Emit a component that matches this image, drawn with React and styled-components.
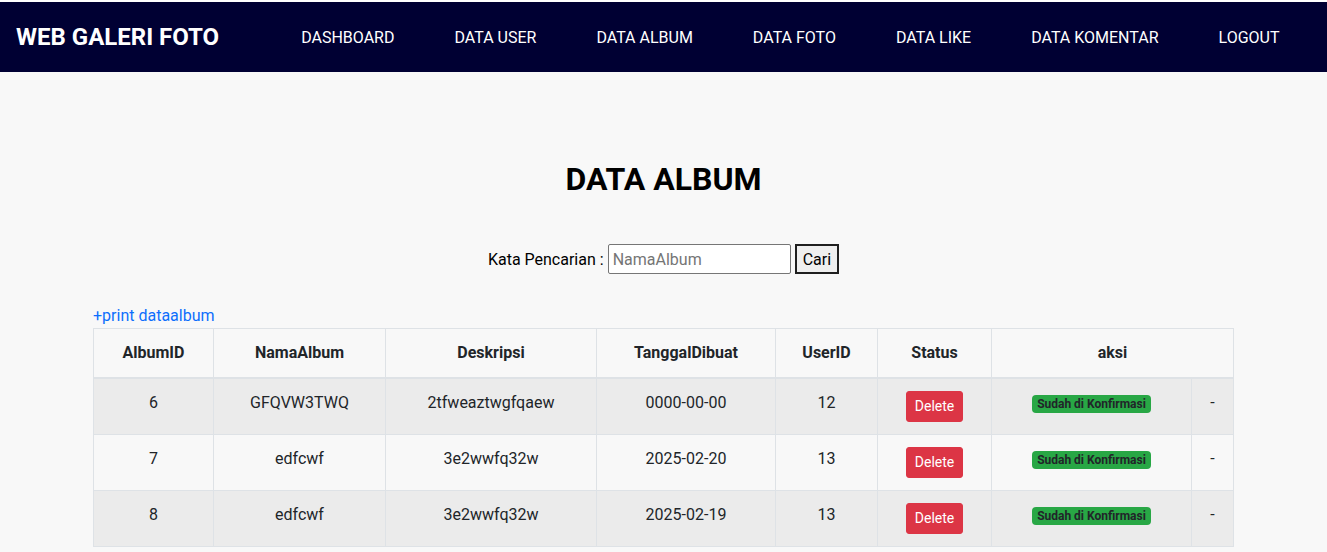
import React from 'react';
import styled, { createGlobalStyle } from 'styled-components';

const GlobalStyle = createGlobalStyle`
  body {
    margin: 0;
    background: #f8f8f8;
    font-family: Roboto, "Liberation Sans", sans-serif;
    color: #212529;
  }
`;

const Navbar = styled.nav`
  display: flex;
  align-items: center;
  height: 70px;
  border-top: 2px solid #ffffff;
  background: #000033;
  padding: 0 16px;
`;

const Brand = styled.a`
  color: #ffffff;
  font-size: 24px;
  font-weight: 700;
  text-decoration: none;
`;

const NavList = styled.ul`
  display: flex;
  gap: 60px;
  list-style: none;
  margin: 0 0 0 82px;
  padding: 0;
`;

const NavLink = styled.a`
  color: #ffffff;
  font-size: 16px;
  text-decoration: none;
`;

const Main = styled.main`
  width: 1141px;
  margin: 0 auto;
  padding-top: 88px;
`;

const Title = styled.h1`
  margin: 0 0 46px;
  font-size: 32px;
  font-weight: 700;
  line-height: 1.2;
  text-align: center;
  color: #000000;
`;

const SearchForm = styled.form`
  display: flex;
  justify-content: center;
  align-items: center;
  gap: 4px;
  font-size: 16px;
  color: #000000;
`;

const SearchInput = styled.input`
  width: 183px;
  height: 30px;
  box-sizing: border-box;
  border: 1px solid #767676;
  border-radius: 2px;
  padding: 1px 4px;
  font-family: inherit;
  font-size: 16px;
  background: #ffffff;

  &::placeholder {
    color: #757575;
  }
`;

const SearchButton = styled.button`
  height: 30px;
  box-sizing: border-box;
  padding: 0 6px;
  border: 2px solid #1f1f1f;
  background: #efefef;
  font-family: inherit;
  font-size: 16px;
  color: #000000;
`;

const PrintLink = styled.a`
  display: block;
  margin-top: 30px;
  font-size: 16px;
  line-height: 24px;
  color: #0d6efd;
  text-decoration: none;
`;

const Table = styled.table`
  width: 1140px;
  table-layout: fixed;
  border-collapse: collapse;
  font-size: 16px;
  line-height: 24px;
`;

const Th = styled.th`
  padding: 12px;
  border: 1px solid #dee2e6;
  border-bottom: 2px solid #dee2e6;
  font-weight: 700;
  text-align: center;
  vertical-align: top;
`;

const Row = styled.tr`
  background: ${props => (props.striped ? '#ebebeb' : '#f8f8f8')};
`;

const Td = styled.td`
  padding: 12px;
  border: 1px solid #dee2e6;
  text-align: center;
  vertical-align: top;
`;

const DeleteButton = styled.button`
  padding: 4px 8px;
  border: 1px solid #dc3545;
  border-radius: 3px;
  background: #dc3545;
  color: #ffffff;
  font-family: inherit;
  font-size: 14px;
  line-height: 21px;
`;

const Badge = styled.span`
  display: inline-block;
  padding: 3px 5px;
  border-radius: 4px;
  background: #28a745;
  color: #212529;
  font-size: 12px;
  font-weight: 700;
  line-height: 1;
`;

const navItems = ['DASHBOARD', 'DATA USER', 'DATA ALBUM', 'DATA FOTO', 'DATA LIKE', 'DATA KOMENTAR', 'LOGOUT'];

const columns = [120, 172, 211, 179, 102, 114, 200, 42];

const albums = [
  { id: 6, nama: 'GFQVW3TWQ', deskripsi: '2tfweaztwgfqaew', tanggal: '0000-00-00', user: 12 },
  { id: 7, nama: 'edfcwf', deskripsi: '3e2wwfq32w', tanggal: '2025-02-20', user: 13 },
  { id: 8, nama: 'edfcwf', deskripsi: '3e2wwfq32w', tanggal: '2025-02-19', user: 13 },
];

const App = () => (
  <>
    <GlobalStyle />
    <Navbar>
      <Brand href="#">WEB GALERI FOTO</Brand>
      <NavList>
        {navItems.map(item => (
          <li key={item}>
            <NavLink href="#">{item}</NavLink>
          </li>
        ))}
      </NavList>
    </Navbar>
    <Main>
      <Title>DATA ALBUM</Title>
      <SearchForm onSubmit={e => e.preventDefault()}>
        <label>Kata Pencarian :</label>
        <SearchInput type="text" placeholder="NamaAlbum" />
        <SearchButton type="submit">Cari</SearchButton>
      </SearchForm>
      <PrintLink href="#">+print dataalbum</PrintLink>
      <Table>
        <colgroup>
          {columns.map((w, i) => (
            <col key={i} style={{ width: w }} />
          ))}
        </colgroup>
        <thead>
          <tr>
            <Th>AlbumID</Th>
            <Th>NamaAlbum</Th>
            <Th>Deskripsi</Th>
            <Th>TanggalDibuat</Th>
            <Th>UserID</Th>
            <Th>Status</Th>
            <Th colSpan={2}>aksi</Th>
          </tr>
        </thead>
        <tbody>
          {albums.map((a, i) => (
            <Row key={a.id} striped={i % 2 === 0}>
              <Td>{a.id}</Td>
              <Td>{a.nama}</Td>
              <Td>{a.deskripsi}</Td>
              <Td>{a.tanggal}</Td>
              <Td>{a.user}</Td>
              <Td>
                <DeleteButton>Delete</DeleteButton>
              </Td>
              <Td>
                <Badge>Sudah di Konfirmasi</Badge>
              </Td>
              <Td>-</Td>
            </Row>
          ))}
        </tbody>
      </Table>
    </Main>
  </>
);

export default App;
